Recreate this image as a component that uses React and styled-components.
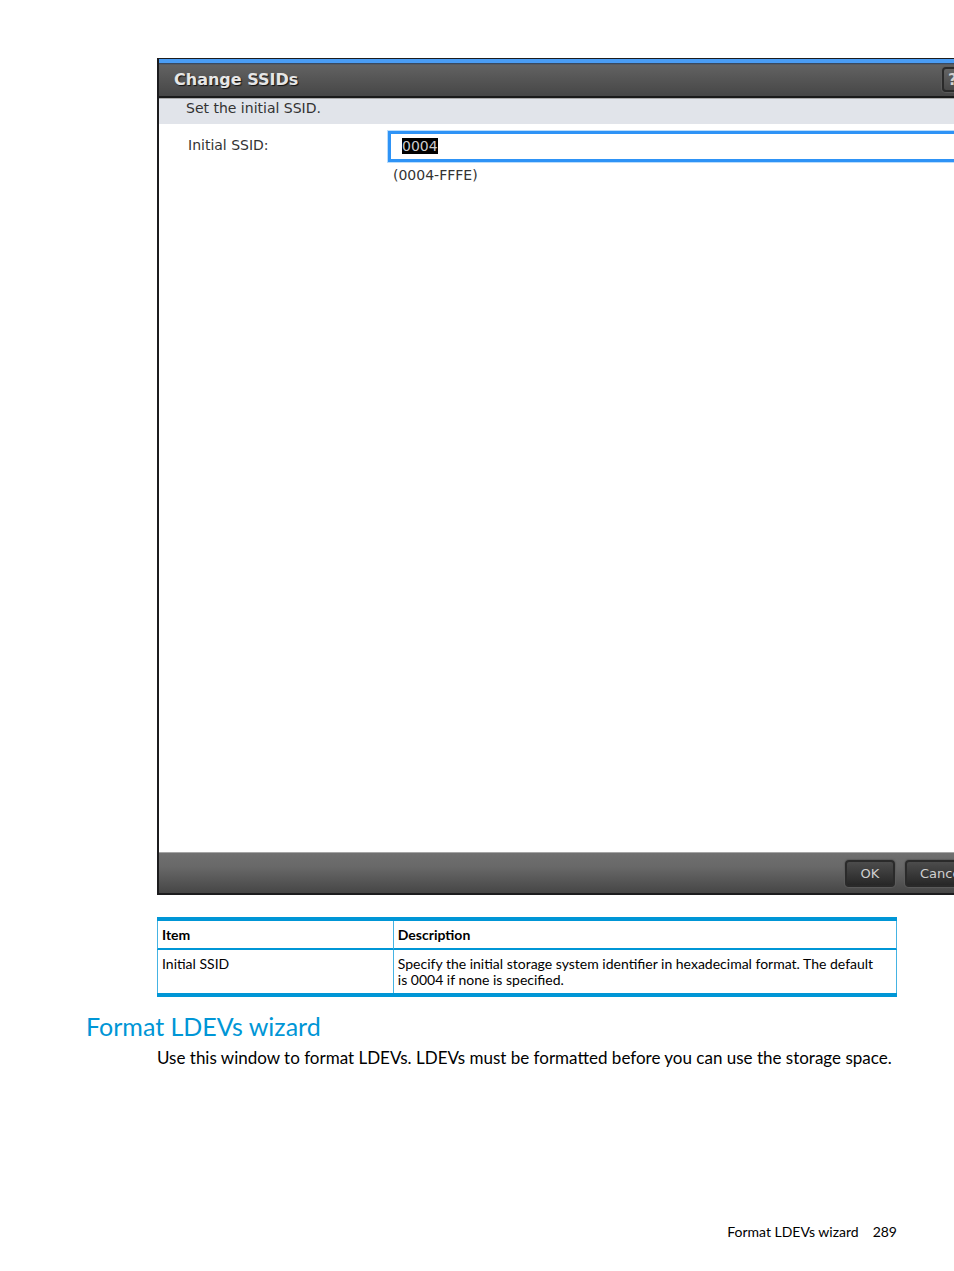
import { useEffect, useRef, useState } from "react";
import styled, { createGlobalStyle } from "styled-components";

const GlobalStyle = createGlobalStyle`
  * {
    box-sizing: border-box;
  }
  body {
    margin: 0;
    background: #fff;
    color: #000;
    font-family: Lato, "Liberation Sans", sans-serif;
  }
`;

const Page = styled.div`
  display: flex;
  flex-direction: column;
  min-height: 100vh;
  padding: 58px 57px 29px 86px;
  overflow: clip;
`;

const Section = styled.section`
  margin-left: 71px;
`;

/* wider than the text column, runs off the right side of the page */
const Dialog = styled.form`
  display: flex;
  flex-direction: column;
  min-height: 837px;
  margin-right: -93px;
  border: 2px solid #1c1c1e;
  border-top-width: 1px;
  font-family: "DejaVu Sans", Verdana, sans-serif;
  font-size: 14px;
  line-height: 16px;
  color: #333;
`;

const TitleBar = styled.header`
  display: flex;
  align-items: center;
  justify-content: space-between;
  height: 39px;
  padding: 0 14px 0 15px;
  border-top: 4px solid #4a9df5;
  border-bottom: 2px solid #1a1a1a;
  background: linear-gradient(#2b4260, #626262 2px, #464646);
`;

const Title = styled.h2`
  margin: 0;
  font-size: 16px;
  line-height: 20px;
  color: #e6e6e6;
  text-shadow: 1px 1px 1px #111;
`;

const DialogButton = styled.button`
  height: ${(props) => (props.$small ? "25px" : "27px")};
  min-width: ${(props) => (props.$small ? "32px" : "50px")};
  padding: 0 13px;
  border: 2px solid #2a2a2a;
  border-radius: 4px;
  background: ${(props) =>
    props.$small
      ? "linear-gradient(#646464, #484848)"
      : "linear-gradient(#4c4c4c, #272727)"};
  box-shadow: 0 0 1px 1px #5c5c5c;
  font-family: inherit;
  font-size: ${(props) => (props.$small ? "16px" : "13px")};
  font-weight: ${(props) => (props.$small ? "bold" : "normal")};
  line-height: 16px;
  color: #d0d0d0;
`;

const HelpButton = styled(DialogButton)`
  padding: 0 4px;
  text-align: left;
`;

const Lead = styled.p`
  height: 26px;
  margin: 0;
  padding: 1px 27px;
  border-top: 1px solid #aaa;
  background: #e1e4ea;
`;

const Fields = styled.div`
  flex: 1;
  display: grid;
  grid-template-columns: 200px 1fr;
  align-content: start;
  padding: 7px 0 0 29px;
`;

const Label = styled.label`
  padding-top: 6px;
`;

const TextInput = styled.input`
  display: block;
  width: 100%;
  height: 31px;
  padding: 0 11px 2px;
  border: 3px solid #2e93f6;
  border-radius: 0;
  outline: 1px solid #b9dcfc;
  outline-offset: 0;
  background: #fff;
  font: inherit;
  color: #333;

  &::selection {
    background: #000;
    color: #ccc;
  }
`;

const Hint = styled.p`
  margin: 5px;
`;

const DialogFooter = styled.footer`
  display: flex;
  justify-content: flex-end;
  gap: 10px;
  height: 41px;
  padding: 7px 9px;
  border-top: 1px solid #a5a5a5;
  background: linear-gradient(#707070, #686868 35%, #464646);
`;

const ItemTable = styled.table`
  width: 100%;
  margin-top: 22px;
  border-collapse: separate;
  border-spacing: 0;
  table-layout: fixed;
  border: solid #0096d6;
  border-width: 4px 0;
  font-size: 14px;
  line-height: 16px;

  th,
  td {
    border-right: 1px solid #45b3e3;
  }
  th:first-child,
  td:first-child {
    border-left: 1px solid #45b3e3;
  }
`;

const Th = styled.th`
  width: ${(props) => props.$width || "auto"};
  height: 29px;
  padding: 0 4px;
  border-bottom: 2px solid #0096d6;
  text-align: left;
`;

const Td = styled.td`
  height: 43px;
  padding: 6px 12px 4px 4px;
  vertical-align: top;
`;

const Heading = styled.h1`
  margin: 13px 0 0;
  font-size: 25px;
  font-weight: normal;
  line-height: 32px;
  color: #0096d6;
`;

const Paragraph = styled.p`
  margin: 6px 0 0;
  font-size: 17px;
  line-height: 20px;
`;

const PageFooter = styled.footer`
  display: flex;
  justify-content: flex-end;
  gap: 14px;
  margin-top: auto;
  font-size: 14px;
  line-height: 20px;
`;

export default function App() {
  const [ssid, setSsid] = useState("0004");
  const inputRef = useRef(null);

  useEffect(() => {
    inputRef.current.focus({ preventScroll: true });
    inputRef.current.select();
  }, []);

  return (
    <>
      <GlobalStyle />
      <Page>
        <Section>
          <Dialog onSubmit={(e) => e.preventDefault()}>
            <TitleBar>
              <Title>Change SSIDs</Title>
              <HelpButton type="button" $small>
                ?
              </HelpButton>
            </TitleBar>
            <Lead>Set the initial SSID.</Lead>
            <Fields>
              <Label htmlFor="ssid">Initial SSID:</Label>
              <div>
                <TextInput
                  id="ssid"
                  ref={inputRef}
                  value={ssid}
                  onChange={(e) => setSsid(e.target.value)}
                />
                <Hint>(0004-FFFE)</Hint>
              </div>
            </Fields>
            <DialogFooter>
              <DialogButton type="submit">OK</DialogButton>
              <DialogButton type="button">Cancel</DialogButton>
            </DialogFooter>
          </Dialog>
          <ItemTable>
            <thead>
              <tr>
                <Th $width="32%">Item</Th>
                <Th>Description</Th>
              </tr>
            </thead>
            <tbody>
              <tr>
                <Td>Initial SSID</Td>
                <Td>
                  Specify the initial storage system identifier in hexadecimal
                  format. The default is 0004 if none is specified.
                </Td>
              </tr>
            </tbody>
          </ItemTable>
        </Section>
        <Heading>Format LDEVs wizard</Heading>
        <Section>
          <Paragraph>
            Use this window to format LDEVs. LDEVs must be formatted before you
            can use the storage space.
          </Paragraph>
        </Section>
        <PageFooter>
          <span>Format LDEVs wizard</span>
          <span>289</span>
        </PageFooter>
      </Page>
    </>
  );
}
